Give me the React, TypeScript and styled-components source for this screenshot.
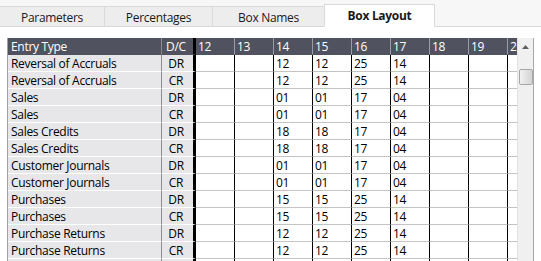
import React from 'react';
import styled, { createGlobalStyle } from 'styled-components';

const GlobalStyle = createGlobalStyle`
  html, body {
    margin: 0;
    padding: 0;
    background: #ffffff;
  }
  body {
    font-family: 'Open Sans', 'Noto Sans', sans-serif;
    font-size: 12px;
    letter-spacing: -0.3px;
    color: #000000;
  }
`;

const Window = styled.div`
  width: 541px;
  height: 261px;
  overflow: hidden;
  display: flex;
  flex-direction: column;
  background: #ffffff;
`;

const TabStrip = styled.div`
  display: flex;
  align-items: flex-end;
  height: 27px;
  flex-shrink: 0;
  background: #f7f7f7;
  border-bottom: 1px solid #d9d9d9;
  box-sizing: border-box;
`;

const Tab = styled.div<{ $active?: boolean; $width: number }>`
  width: ${p => p.$width}px;
  height: ${p => (p.$active ? 23 : 20)}px;
  margin-bottom: ${p => (p.$active ? -1 : 0)}px;
  margin-left: ${p => (p.$active ? -1 : 0)}px;
  box-sizing: border-box;
  display: flex;
  align-items: center;
  justify-content: center;
  border: 1px solid #d9d9d9;
  border-bottom: ${p => (p.$active ? '1px solid #ffffff' : 'none')};
  border-left: ${p => (p.$active ? '1px solid #d9d9d9' : 'none')};
  background: ${p => (p.$active ? '#ffffff' : '#ededed')};
  font-weight: ${p => (p.$active ? 700 : 400)};
  font-size: 12px;
  color: #1a1a1a;
  padding-top: 1px;
  padding-bottom: ${p => (p.$active ? 1 : 0)}px;
`;

const Pane = styled.div`
  flex: 1;
  display: flex;
  padding: 11px 7px 0 7px;
  min-height: 0;
`;

const Viewport = styled.div`
  flex: 1;
  overflow: hidden;
  border-left: 1px solid #a0a0a0;
`;

const Row = styled.div<{ $header?: boolean }>`
  display: grid;
  grid-template-columns: 154px 34px repeat(9, 39px);
  height: 17px;
  background: ${p => (p.$header ? '#50535f' : 'transparent')};
  color: ${p => (p.$header ? '#ffffff' : '#000000')};
`;

const Cell = styled.div<{ $kind: 'name' | 'dc' | 'num'; $header?: boolean }>`
  box-sizing: border-box;
  height: 17px;
  line-height: 17px;
  white-space: nowrap;
  overflow: hidden;
  padding-left: ${p => (p.$kind === 'dc' ? 0 : p.$kind === 'name' ? 3 : 2)}px;
  text-align: ${p => (p.$kind === 'dc' ? 'center' : 'left')};
  padding-right: ${p => (p.$kind === 'dc' ? 3 : 0)}px;
  background: ${p => (p.$header ? 'transparent' : p.$kind === 'num' ? '#ffffff' : '#e7e7ea')};
  border-bottom: 1px solid ${p => (p.$header ? 'transparent' : p.$kind === 'num' ? '#c4c4c4' : '#ffffff')};
  border-right: ${p =>
    p.$kind === 'dc'
      ? '3px solid #000000'
      : p.$kind === 'name'
        ? `1px solid ${p.$header ? '#8a8c96' : '#8c8c8c'}`
        : `1px solid ${p.$header ? '#9a9ca6' : '#000000'}`};
`;

const ScrollBar = styled.div`
  width: 17px;
  flex-shrink: 0;
  background: #f0f0f0;
  border-left: 1px solid #e2e2e2;
  border-right: 1px solid #a8a8a8;
  box-sizing: border-box;
  display: flex;
  flex-direction: column;
  align-items: center;
`;

const ArrowButton = styled.div`
  width: 100%;
  height: 17px;
  display: flex;
  align-items: center;
  justify-content: center;
`;

const Thumb = styled.div`
  margin-top: 14px;
  width: 14px;
  height: 16px;
  box-sizing: border-box;
  border: 1px solid #a6a6a6;
  border-radius: 2px;
  background: linear-gradient(to right, #f2f2f2, #e0e0e0 55%, #d4d4d4);
`;

const columns = ['12', '13', '14', '15', '16', '17', '18', '19', '20'];

const rows: { name: string; dc: string; values: string[] }[] = [
  { name: 'Reversal of Accruals', dc: 'DR', values: ['', '', '12', '12', '25', '14'] },
  { name: 'Reversal of Accruals', dc: 'CR', values: ['', '', '12', '12', '25', '14'] },
  { name: 'Sales', dc: 'DR', values: ['', '', '01', '01', '17', '04'] },
  { name: 'Sales', dc: 'CR', values: ['', '', '01', '01', '17', '04'] },
  { name: 'Sales Credits', dc: 'DR', values: ['', '', '18', '18', '17', '04'] },
  { name: 'Sales Credits', dc: 'CR', values: ['', '', '18', '18', '17', '04'] },
  { name: 'Customer Journals', dc: 'DR', values: ['', '', '01', '01', '17', '04'] },
  { name: 'Customer Journals', dc: 'CR', values: ['', '', '01', '01', '17', '04'] },
  { name: 'Purchases', dc: 'DR', values: ['', '', '15', '15', '25', '14'] },
  { name: 'Purchases', dc: 'CR', values: ['', '', '15', '15', '25', '14'] },
  { name: 'Purchase Returns', dc: 'DR', values: ['', '', '12', '12', '25', '14'] },
  { name: 'Purchase Returns', dc: 'CR', values: ['', '', '12', '12', '25', '14'] },
  { name: '', dc: '', values: [] },
];

const tabs = [
  { label: 'Parameters', width: 105 },
  { label: 'Percentages', width: 108 },
  { label: 'Box Names', width: 112 },
  { label: 'Box Layout', width: 111, active: true },
];

const App: React.FC = function() {
  return (
    <>
      <GlobalStyle />
      <Window>
        <TabStrip>
          {tabs.map(t => (
            <Tab key={t.label} $width={t.width} $active={t.active}>
              {t.label}
            </Tab>
          ))}
        </TabStrip>
        <Pane>
          <Viewport>
            <Row $header>
              <Cell $kind="name" $header>Entry Type</Cell>
              <Cell $kind="dc" $header>D/C</Cell>
              {columns.map(c => (
                <Cell key={c} $kind="num" $header>{c}</Cell>
              ))}
            </Row>
            {rows.map((r, i) => (
              <Row key={i}>
                <Cell $kind="name">{r.name}</Cell>
                <Cell $kind="dc">{r.dc}</Cell>
                {columns.map((c, j) => (
                  <Cell key={c} $kind="num">{r.values[j] || ''}</Cell>
                ))}
              </Row>
            ))}
          </Viewport>
          <ScrollBar>
            <ArrowButton>
              <svg width="7" height="4" viewBox="0 0 7 4">
                <path d="M0 4 L3.5 0 L7 4 Z" fill="#606060" />
              </svg>
            </ArrowButton>
            <Thumb />
          </ScrollBar>
        </Pane>
      </Window>
    </>
  );
};

export default App;
